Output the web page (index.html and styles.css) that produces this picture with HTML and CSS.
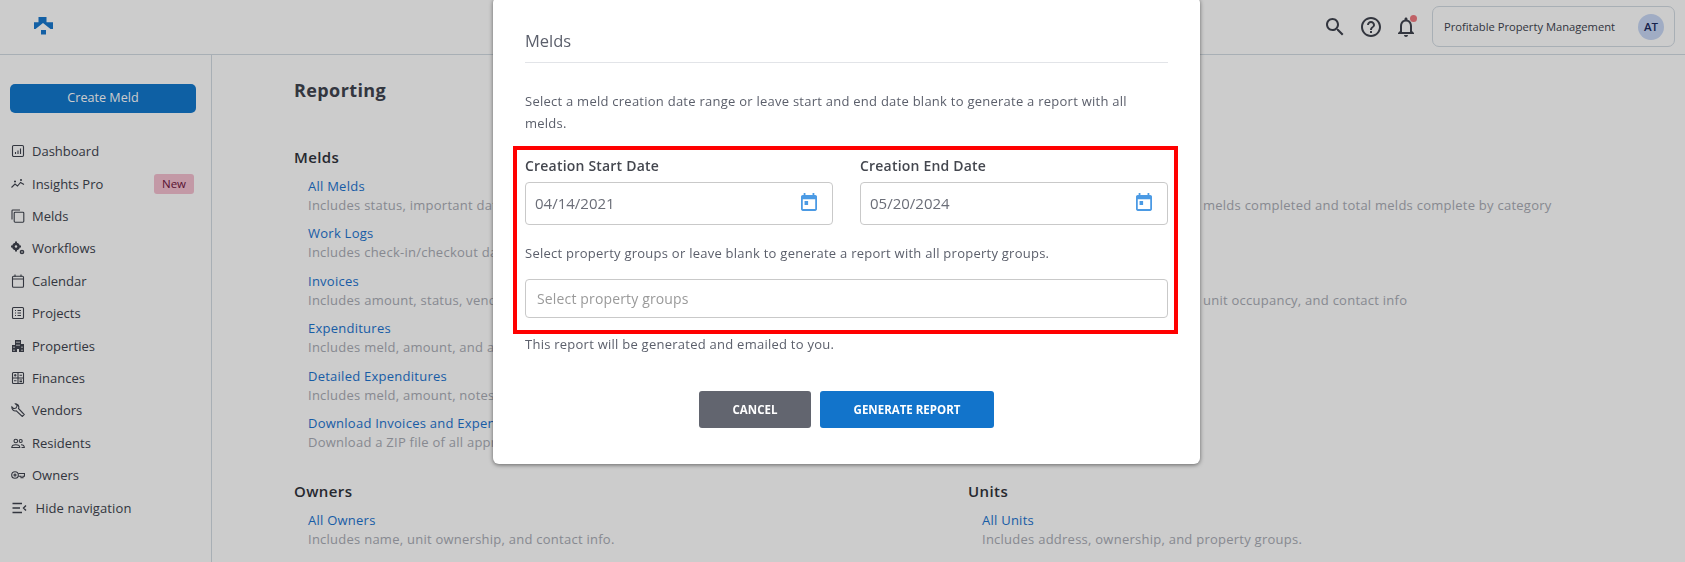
FILE: index.html
```html
<!DOCTYPE html>
<html lang="en">
<head>
<meta charset="utf-8">
<title>Reporting</title>
<link rel="stylesheet" href="styles.css">
</head>
<body>
<div class="app">
  <header class="topbar">
    <svg class="logo" viewBox="0 0 20 18"><path d="M5.500 0h8v5.200H20V12h-2.500L10 6 2.500 12H1V5.200h4.500z"/><path d="M8 13h5v4.500H8z"/></svg>
    <div class="topbar-right">
      <svg class="top-icon" viewBox="0 0 24 24"><path d="M15.500 14h-.79l-.28-.27C15.410 12.590 16 11.110 16 9.500 16 5.910 13.090 3 9.500 3S3 5.910 3 9.500 5.910 16 9.500 16c1.610 0 3.090-.59 4.230-1.570l.27.28v.79l5 4.990L20.490 19l-4.990-5zm-6 0C7.010 14 5 11.990 5 9.500S7.010 5 9.500 5 14 7.010 14 9.500 11.990 14 9.500 14z"/></svg>
      <svg class="top-icon" viewBox="0 0 24 24"><path d="M11 18h2v-2h-2v2zm1-16C6.480 2 2 6.480 2 12s4.480 10 10 10 10-4.480 10-10S17.520 2 12 2zm0 18c-4.410 0-8-3.590-8-8s3.590-8 8-8 8 3.590 8 8-3.590 8-8 8zm0-14c-2.210 0-4 1.790-4 4h2c0-1.100.9-2 2-2s2 .9 2 2c0 2-3 1.750-3 5h2c0-2.250 3-2.500 3-5 0-2.210-1.790-4-4-4z"/></svg>
      <span class="bell">
        <svg class="top-icon" viewBox="0 0 24 24"><path d="M12 22c1.100 0 2-.9 2-2h-4c0 1.100.9 2 2 2zm6-6v-5c0-3.070-1.630-5.640-4.500-6.320V4c0-.83-.67-1.500-1.500-1.500s-1.500.67-1.500 1.500v.68C7.640 5.360 6 7.920 6 11v5l-2 2v1h16v-1l-2-2zm-2 1H8v-6c0-2.480 1.510-4.500 4-4.500s4 2.020 4 4.500v6z"/></svg>
        <span class="bell-dot"></span>
      </span>
      <div class="account">
        <span class="account-name">Profitable Property Management</span>
        <span class="avatar">AT</span>
      </div>
    </div>
  </header>
  <div class="body-row">
    <aside class="sidebar">
      <button class="create-btn">Create Meld</button>
      <nav class="nav">
        <a class="nav-item"><svg class="nav-icon" viewBox="0 0 14 14"><rect x="1.500" y="1.500" width="11" height="11" rx="1.200"/><path d="M4.500 10V8M7 10V6.500M9.500 10V4.500"/></svg>Dashboard</a>
        <a class="nav-item"><svg class="nav-icon" viewBox="0 0 14 14"><path d="M.5 10.500l3.500-3.500 2.500 2 3-3.500 3.500 2"/><path d="M4 3.500v2M3 4.500h2M10 2v2M9 3h2"/></svg>Insights Pro<span class="badge">New</span></a>
        <a class="nav-item"><svg class="nav-icon" viewBox="0 0 14 14"><path d="M1 10.500V1.800C1 1.300 1.300 1 1.800 1H9"/><rect x="3.200" y="3.200" width="9.600" height="10" rx=".9"/></svg>Melds</a>
        <a class="nav-item"><svg class="nav-icon nav-icon-solid" viewBox="0 0 14 14"><circle cx="5" cy="5.500" r="3.800"/><circle cx="5" cy="5.500" r="1.200" fill="#fff"/><path d="M4 .5h2v2H4zM4 8.500h2v2H4zM0 4.500h2v2H0zM8 4.500h2v2H8z"/><circle cx="11" cy="11" r="2.300"/><circle cx="11" cy="11" r=".8" fill="#fff"/></svg>Workflows</a>
        <a class="nav-item"><svg class="nav-icon" viewBox="0 0 14 14"><rect x="1.500" y="2.200" width="11" height="11" rx="1"/><path d="M1.500 5h11M4 .5v2.200M10 .5v2.200"/></svg>Calendar</a>
        <a class="nav-item"><svg class="nav-icon" viewBox="0 0 14 14"><rect x="1.500" y="1.500" width="11" height="11" rx="1"/><path d="M4 4.500h1M6.500 4.500H10M4 7h1M6.500 7H10M4 9.500h1M6.500 9.500H10"/></svg>Projects</a>
        <a class="nav-item"><svg class="nav-icon nav-icon-solid" viewBox="0 0 14 14"><path d="M4 1h6v4h3v8H8v-3H6v3H1V6h3zM5.500 2.500v1.500h1V2.500zm2 0v1.500h1V2.500zm-2 3v1.500h1V5.500zm2 0v1.500h1V5.500zM2.500 7.500V9h1V7.500zm8 0V9h1V7.500zm-8 3V12h1v-1.500zm8 0V12h1v-1.500z" fill-rule="evenodd"/></svg>Properties</a>
        <a class="nav-item"><svg class="nav-icon" viewBox="0 0 14 14"><rect x="1.500" y="1.500" width="11" height="11" rx="1"/><path d="M7 1.500v11M1.500 7h11M3 4.300h2.500M4.200 3v2.600M8.500 4.300H11M3 9.800h2.500M8.500 9h2.500M8.500 10.600h2.500"/></svg>Finances</a>
        <a class="nav-item"><svg class="nav-icon" viewBox="0 0 14 14"><path d="M5.500 1a3.500 3.500 0 0 0-1-.1L6.300 2.700 5 5 2.700 5.700.9 3.900A3.500 3.500 0 0 0 5.300 7.800l6 5.700 2-2-5.800-6A3.500 3.500 0 0 0 5.500 1z"/></svg>Vendors</a>
        <a class="nav-item"><svg class="nav-icon" viewBox="0 0 14 14"><circle cx="4.800" cy="5" r="1.800"/><circle cx="9.700" cy="5" r="1.500"/><path d="M.8 11.500c0-1.900 2-2.800 4-2.800s4 .9 4 2.800zM10 8.700c1.700 0 3.300.8 3.300 2.800H10.500"/></svg>Residents</a>
        <a class="nav-item"><svg class="nav-icon" viewBox="0 0 14 14"><circle cx="4" cy="7" r="3.300"/><circle cx="4" cy="7" r="1"/><path d="M7.300 5.500h6.200v2.800h-1.500v1.400h-2V8.300H7.300"/></svg>Owners</a>
        <a class="nav-item nav-hide"><svg class="nav-icon nav-icon-wide" viewBox="0 0 15 14"><path d="M.5 2.500h9.500M.5 7H8M.5 11.500h9.500M14 4.500L11.500 7l2.500 2.500"/></svg>Hide navigation</a>
      </nav>
    </aside>
    <main class="main">
      <h1 class="page-title">Reporting</h1>
      <div class="report-grid">
        <section>
          <h2 class="section-title">Melds</h2>
          <div class="item"><a class="link">All Melds</a><p class="desc">Includes status, important dates</p></div>
          <div class="item"><a class="link">Work Logs</a><p class="desc">Includes check-in/checkout dates</p></div>
          <div class="item"><a class="link">Invoices</a><p class="desc">Includes amount, status, vendor</p></div>
          <div class="item"><a class="link">Expenditures</a><p class="desc">Includes meld, amount, and all</p></div>
          <div class="item"><a class="link">Detailed Expenditures</a><p class="desc">Includes meld, amount, notes</p></div>
          <div class="item"><a class="link">Download Invoices and Expenditures</a><p class="desc">Download a ZIP file of all approved</p></div>
        </section>
        <section>
          <div class="section-title"></div>
          <div class="item"><span class="link"></span><p class="desc desc-tail">melds completed and total melds complete by category</p></div>
          <div class="item"></div>
          <div class="item"><span class="link"></span><p class="desc desc-tail">unit occupancy, and contact info</p></div>
        </section>
        <section class="lower">
          <h2 class="section-title">Owners</h2>
          <div class="item"><a class="link">All Owners</a><p class="desc">Includes name, unit ownership, and contact info.</p></div>
        </section>
        <section class="lower">
          <h2 class="section-title">Units</h2>
          <div class="item"><a class="link">All Units</a><p class="desc">Includes address, ownership, and property groups.</p></div>
        </section>
      </div>
    </main>
  </div>
</div>
<div class="backdrop"></div>
<div class="modal">
  <h3 class="modal-title">Melds</h3>
  <p class="modal-text modal-intro">Select a meld creation date range or leave start and end date blank to generate a report with all melds.</p>
  <div class="highlight">
    <div class="date-row">
      <div class="date-field">
        <label class="field-label">Creation Start Date</label>
        <div class="input"><span class="input-value">04/14/2021</span><svg class="cal" viewBox="3 1 18 20"><path d="M7 10h4v4.500H7zM16 1v2H8V1H6v2H5c-1.110 0-1.990.9-1.990 2L3 19c0 1.100.89 2 2 2h14c1.100 0 2-.9 2-2V5c0-1.100-.9-2-2-2h-1V1h-2zm3 18H5V8h14v11z"/></svg></div>
      </div>
      <div class="date-field">
        <label class="field-label">Creation End Date</label>
        <div class="input"><span class="input-value">05/20/2024</span><svg class="cal" viewBox="3 1 18 20"><path d="M7 10h4v4.500H7zM16 1v2H8V1H6v2H5c-1.110 0-1.990.9-1.990 2L3 19c0 1.100.89 2 2 2h14c1.100 0 2-.9 2-2V5c0-1.100-.9-2-2-2h-1V1h-2zm3 18H5V8h14v11z"/></svg></div>
      </div>
    </div>
    <p class="modal-text groups-text">Select property groups or leave blank to generate a report with all property groups.</p>
    <div class="select">Select property groups</div>
  </div>
  <p class="modal-text emailed">This report will be generated and emailed to you.</p>
  <div class="actions">
    <button class="btn btn-cancel">CANCEL</button>
    <button class="btn btn-primary">GENERATE REPORT</button>
  </div>
</div>
</body>
</html>
```
FILE: styles.css
```css
* { box-sizing: border-box; }
html, body { margin: 0; height: 100%; overflow: hidden; }
body { font-family: "Open Sans", "Liberation Sans", sans-serif; color: #40444f; background: #fff; }
h1, h2, h3, p { margin: 0; }

.app { display: flex; flex-direction: column; height: 562px; }

.topbar { flex: none; height: 55px; display: flex; align-items: center; justify-content: space-between; border-bottom: 1px solid #d3dbe3; padding: 0 10px 1px 33px; }
.logo { width: 20px; height: 18px; fill: #1878cf; margin-top: -1px; }
.topbar-right { display: flex; align-items: center; }
.top-icon { display: block; width: 24px; height: 24px; fill: #40444f; }
.topbar-right > .top-icon { margin-right: 12px; }
.bell { position: relative; display: block; margin-right: 13px; left: -1px; }
.bell-dot { position: absolute; top: 0; right: 1px; width: 7px; height: 7px; border-radius: 50%; background: #f07a80; }
.account { width: 243px; height: 41px; display: flex; align-items: center; justify-content: space-between; border: 1px solid #d3dbe3; border-radius: 7px; padding: 0 10px 0 11px; }
.account-name { font-size: 11.200px; font-weight: 500; color: #40444f; }
.avatar { width: 26px; height: 26px; border-radius: 50%; background: #c8d8f5; color: #1c2a5e; font-size: 11.500px; font-weight: 600; display: flex; align-items: center; justify-content: center; }

.body-row { flex: 1; display: flex; min-height: 0; }
.sidebar { flex: none; width: 212px; border-right: 1px solid #d3dbe3; padding: 29px 15px 0 10px; }
.create-btn { display: block; width: 186px; height: 29px; border: 0; border-radius: 5px; padding: 0 0 3px; background: #1278ce; color: #fff; font: 400 12.600px "Open Sans", sans-serif; }
.nav { margin-top: 22px; display: flex; flex-direction: column; }
.nav-item { height: 32.400px; display: flex; align-items: center; font-size: 13px; color: #40444f; position: relative; }
.nav-icon { flex: none; width: 14px; height: 14px; margin: 0 7px 0 1px; fill: none; stroke: #40444f; stroke-width: 1.100; }
.nav-icon-solid { fill: #40444f; stroke: none; }
.nav-icon-wide { width: 15px; margin: 0 8.500px 0 2px; stroke-width: 1.400; }
.nav-hide { letter-spacing: .1px; padding-top: 1px; }
.badge { margin-left: auto; width: 40px; height: 20px; background: #f4c0d0; color: #701540; border-radius: 3px; font-size: 11.500px; letter-spacing: 0; display: flex; align-items: center; justify-content: center; margin-right: 2px; }

.main { flex: 1; padding: 22px 0 0 82px; min-width: 0; overflow: hidden; }
.page-title { font-size: 18px; font-weight: 700; line-height: 26px; color: #40444f; letter-spacing: .4px; }
.report-grid { display: grid; grid-template-columns: 674px 1fr; margin-top: 42px; }
.section-title { height: 24px; font-size: 15px; line-height: 24px; font-weight: 600; color: #30333b; letter-spacing: .4px; margin-bottom: 7.500px; }
.lower { margin-top: 17px; }
.item { height: 47.600px; padding-left: 14px; white-space: nowrap; }
.link { display: block; height: 19px; font-size: 13px; line-height: 19px; color: #1d74d0; letter-spacing: .25px; }
.desc { font-size: 13px; line-height: 19px; color: #a9acb5; letter-spacing: .25px; }
.desc-tail { padding-left: 221px; }

.backdrop { position: fixed; inset: 0; background: rgba(0, 0, 0, .2); }

.modal { position: absolute; left: 493px; top: -3px; width: 707px; height: 467px; background: #fff; border-radius: 6px; box-shadow: 0 1px 4px rgba(0, 0, 0, .5); padding: 32px 32px 0; }
.modal-title { font-size: 16.500px; font-weight: 400; line-height: 24px; color: #5b5f6b; border-bottom: 1px solid #e2e4e8; height: 34px; }
.modal-text { font-size: 13px; line-height: 22px; color: #5b5f6b; letter-spacing: .25px; }
.modal-intro { margin-top: 27px; }
.highlight { margin: 12px -10px 0 -12px; height: 188px; border: 4px solid #f00; padding: 6px 6px 0 8px; }
.date-row { display: flex; gap: 27px; }
.date-field { flex: 1; min-width: 0; }
.field-label { display: block; font-size: 14px; font-weight: 600; line-height: 20px; color: #44474f; letter-spacing: .2px; }
.input { margin-top: 6px; height: 43px; display: flex; align-items: center; justify-content: space-between; border: 1px solid #c9c9c9; border-radius: 4px; padding: 0 15px 0 9px; font-size: 15px; color: #6b6e78; }
.input-value { margin-top: -2px; }
.cal { width: 16px; height: 18px; fill: #4b9ae4; margin-top: -3px; }
.groups-text { margin-top: 17px; }
.select { margin-top: 15px; height: 39px; display: flex; align-items: center; border: 1px solid #c9c9c9; border-radius: 4px; padding: 0 11px; font-size: 14px; letter-spacing: .15px; color: #9a9a9a; }
.emailed { margin-top: -1px; }
.actions { display: flex; justify-content: center; gap: 9px; margin-top: 36px; }
.btn { height: 37px; border: 0; border-radius: 3px; color: #fff; font: 700 11.500px "Open Sans", sans-serif; }
.btn-cancel { width: 112px; background: #62656f; }
.btn-primary { width: 174px; background: #1274cb; }
```
